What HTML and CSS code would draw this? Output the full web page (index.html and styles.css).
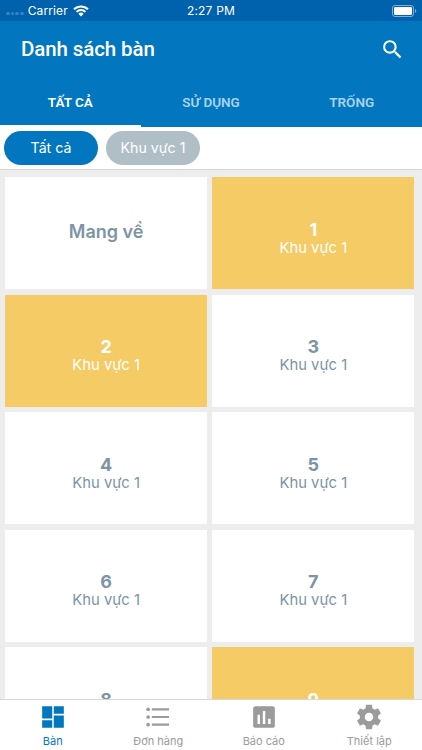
FILE: index.html
```html
<!DOCTYPE html>
<html lang="vi">
<head>
    <meta charset="UTF-8">
    <title>Danh sách bàn</title>
    <link rel="stylesheet" href="styles.css">
</head>
<body>
    <div class="statusbar">
        <div class="carrier">
            <span class="signal"><i></i><i></i><i></i><i></i></span>
            <span>Carrier</span>
            <svg class="wifi" viewBox="0 0 16 12">
                <path d="M1 4.3a10 10 0 0 1 14 0M3.5 6.9a6.4 6.4 0 0 1 9 0" fill="none" stroke="#fff" stroke-width="2"/>
                <path d="M5.4 8.8a3.7 3.7 0 0 1 5.2 0L8 11.5z" fill="#fff"/>
            </svg>
        </div>
        <div class="time">2:27 PM</div>
        <svg class="battery" viewBox="0 0 25 12">
            <rect x=".5" y=".5" width="21" height="11" rx="2.5" fill="none" stroke="#80b1d7"/>
            <rect x="2" y="2" width="18" height="8" rx="1.2" fill="#fff"/>
            <path d="M23 4v4a2.2 2.2 0 0 0 0-4z" fill="#80b1d7"/>
        </svg>
    </div>

    <header class="header">
        <h1>Danh sách bàn</h1>
        <svg class="search" viewBox="0 0 24 24"><path d="M15.5 14h-.79l-.28-.27A6.47 6.47 0 0 0 16 9.5 6.5 6.5 0 1 0 9.5 16c1.61 0 3.09-.59 4.23-1.57l.27.28v.79l5 4.99L20.49 19l-4.99-5zm-6 0C7.01 14 5 11.99 5 9.5S7.01 5 9.5 5 14 7.01 14 9.5 11.99 14 9.5 14z"/></svg>
    </header>

    <nav class="tabs">
        <div class="tab active">TẤT CẢ</div>
        <div class="tab">SỬ DỤNG</div>
        <div class="tab">TRỐNG</div>
    </nav>

    <div class="filters">
        <div class="chip active">Tất cả</div>
        <div class="chip">Khu vực 1</div>
    </div>

    <main class="tables">
        <div class="table takeaway"><b>Mang về</b></div>
        <div class="table used"><b>1</b><span>Khu vực 1</span></div>
        <div class="table used"><b>2</b><span>Khu vực 1</span></div>
        <div class="table"><b>3</b><span>Khu vực 1</span></div>
        <div class="table"><b>4</b><span>Khu vực 1</span></div>
        <div class="table"><b>5</b><span>Khu vực 1</span></div>
        <div class="table"><b>6</b><span>Khu vực 1</span></div>
        <div class="table"><b>7</b><span>Khu vực 1</span></div>
        <div class="table"><b>8</b></div>
        <div class="table used"><b>9</b></div>
    </main>

    <nav class="bottom">
        <div class="item active">
            <svg viewBox="0 0 24 24"><path d="M2 2h9.3v11.3H2zM12.7 2H22v7h-9.3zM2 15h9.3v7H2zM12.7 10.7H22V22h-9.3z"/></svg>
            <span>Bàn</span>
        </div>
        <div class="item">
            <svg viewBox="0 0 24 24"><circle cx="2.9" cy="4.9" r="1.7"/><circle cx="2.9" cy="12" r="1.7"/><circle cx="2.9" cy="19.1" r="1.7"/><path d="M6.3 3.9h15.9v2H6.3zM6.3 11h15.9v2H6.3zM6.3 18.1h15.9v2H6.3z"/></svg>
            <span>Đơn hàng</span>
        </div>
        <div class="item">
            <svg viewBox="0 0 24 24"><path fill-rule="evenodd" d="M4 2h16a2 2 0 0 1 2 2v16a2 2 0 0 1-2 2H4a2 2 0 0 1-2-2V4a2 2 0 0 1 2-2zM6 10v8.5h2.3V10zM10.9 6.5v12h2.3v-12zM15.8 13.5v5h2.3v-5z"/></svg>
            <span>Báo cáo</span>
        </div>
        <div class="item">
            <svg viewBox="1.3 1.3 21.4 21.4"><path d="M19.43 12.98c.04-.32.07-.64.07-.98s-.03-.66-.07-.98l2.11-1.65c.19-.15.24-.42.12-.64l-2-3.46c-.12-.22-.39-.3-.61-.22l-2.49 1c-.52-.4-1.08-.73-1.69-.98l-.38-2.65A.488.488 0 0 0 14 2h-4c-.25 0-.46.18-.49.42l-.38 2.65c-.61.25-1.17.59-1.69.98l-2.49-1c-.23-.09-.49 0-.61.22l-2 3.46c-.13.22-.07.49.12.64l2.11 1.65c-.04.32-.07.65-.07.98s.03.66.07.98l-2.11 1.65c-.19.15-.24.42-.12.64l2 3.46c.12.22.39.3.61.22l2.49-1c.52.4 1.08.73 1.69.98l.38 2.65c.03.24.24.42.49.42h4c.25 0 .46-.18.49-.42l.38-2.65c.61-.25 1.17-.59 1.69-.98l2.49 1c.23.09.49 0 .61-.22l2-3.46c.12-.22.07-.49-.12-.64l-2.11-1.65zM12 15.5a3.5 3.5 0 1 1 0-7 3.5 3.5 0 0 1 0 7z"/></svg>
            <span>Thiết lập</span>
        </div>
    </nav>
</body>
</html>
```
FILE: styles.css
```css
* { box-sizing: border-box; }
body { margin: 0; height: 750px; display: flex; flex-direction: column; overflow: hidden; background: #ededed; font-family: Inter, "Noto Sans", sans-serif; }
svg { display: block; }

.statusbar { flex: none; height: 21px; display: grid; grid-template-columns: 1fr auto 1fr; align-items: center; padding: 0 6px; background: #0062ad; color: #fff; font-size: 12px; }
.carrier { display: flex; align-items: center; }
.carrier > span:nth-child(2) { letter-spacing: .1px; }
.signal { display: flex; gap: 1px; margin: 6px 4px 0 0; }
.signal i { width: 3.7px; height: 3.7px; border-radius: 50%; background: #3583c0; }
.wifi { width: 16px; height: 12px; margin-left: 5px; }
.time { letter-spacing: .2px; }
.battery { width: 25px; height: 12px; justify-self: end; margin-right: -1px; }

.header { flex: none; height: 56px; display: flex; align-items: center; justify-content: space-between; padding: 0 17px 0 21px; background: #0277bf; color: #fff; }
.header h1 { margin: 0; font: 500 20.5px Roboto, sans-serif; letter-spacing: -.1px; }
.search { width: 25px; height: 25px; fill: #fff; }

.tabs { flex: none; height: 49.5px; display: flex; background: #0277bf; }
.tab { flex: 1; display: flex; align-items: center; justify-content: center; padding-top: 2px; border-bottom: 2px solid transparent; color: #a9d4ed; font: 600 13.5px Roboto, sans-serif; }
.tab.active { color: #fff; border-color: #fff; }

.filters { flex: none; height: 43.5px; display: flex; align-items: center; gap: 8px; padding: 0 4px; background: #fff; border-bottom: 1px solid #d4d4d4; }
.chip { width: 94px; height: 34px; display: flex; align-items: center; justify-content: center; border-radius: 17px; background: #b0bec6; color: #fff; font-size: 14.2px; }
.chip.active { background: #0277bf; }

.tables { flex: 1; min-height: 0; overflow: hidden; display: grid; grid-template-columns: 202.3px 202.3px; grid-auto-rows: 112px; gap: 5.5px 4.9px; padding: 7.3px 5px 0; }
.table { display: flex; flex-direction: column; align-items: center; padding-top: 43.6px; background: #fff; color: #7c94a5; font-size: 14.8px; line-height: 18px; }
.table b { font-size: 18px; font-weight: 700; line-height: 18px; }
.table.takeaway { padding-top: 45.6px; }
.table.takeaway b { font-weight: 600; }
.table.used { background: #f4cb64; color: #fff; }

.bottom { flex: none; height: 51px; display: flex; background: #fff; border-top: 1px solid #d8d8d8; }
.item { flex: 1; display: flex; flex-direction: column; align-items: center; padding-top: 4px; color: #9b9b9b; font-size: 11px; line-height: 14px; }
.item svg { width: 26px; height: 26px; margin-bottom: 4px; fill: currentColor; }
.item.active { color: #0277bf; }
```
